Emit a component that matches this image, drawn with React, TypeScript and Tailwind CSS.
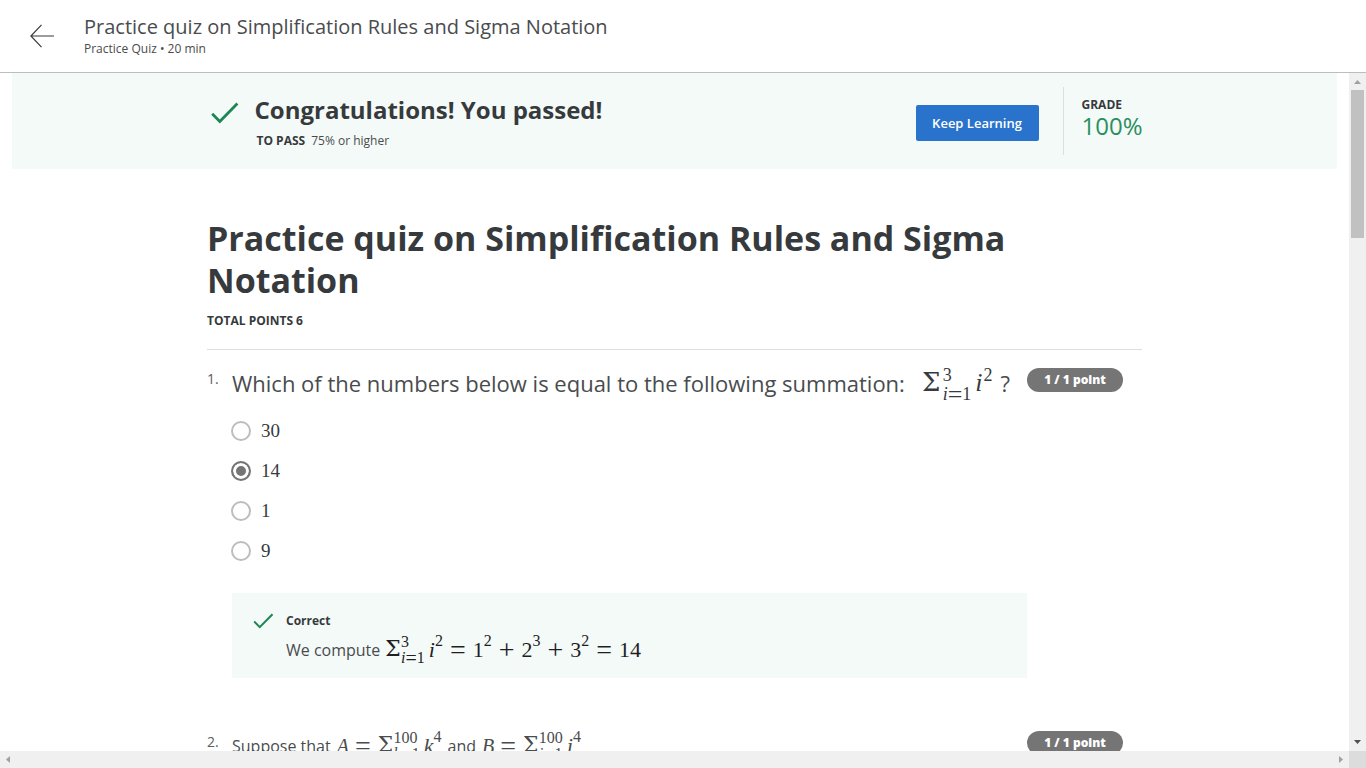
import { useState } from "react";
import type { ReactNode } from "react";

const SERIF = "font-['Liberation_Serif',serif]";

function Check({ className }: { className: string }) {
  return (
    <svg viewBox="0 0 28 22" className={className} fill="none" stroke="#1d8653" strokeWidth="2.8" aria-hidden="true">
      <path d="M1.2 11.8 8.8 19.4 26.4 1.6" />
    </svg>
  );
}

function MathText({ children, className = "" }: { children: ReactNode; className?: string }) {
  return <span className={`${SERIF} inline-flex items-center whitespace-nowrap leading-none ${className}`}>{children}</span>;
}

function Op({ children }: { children: ReactNode }) {
  return <span className="text-[28px] leading-6">{children}</span>;
}

function Sum({ index, from, to, large = false }: { index: string; from: string; to: string; large?: boolean }) {
  return (
    <>
      <span className={large ? "font-['DejaVu_Math_TeX_Gyre','Liberation_Serif',serif] text-[26px]" : "font-['DejaVu_Math_TeX_Gyre','Liberation_Serif',serif] text-[22px]"}>Σ</span>
      <span className={large ? "ml-0.5 flex flex-col pt-1 text-[18px] leading-[19px]" : "flex flex-col text-[16px] leading-4"}>
        <span>{to}</span>
        <span className="flex items-center">
          <i>{index}</i>
          <span className={large ? "text-[26px] leading-4" : "text-[20px] leading-4"}>=</span>
          {from}
        </span>
      </span>
    </>
  );
}

function Power({ base, exp, large = false }: { base: ReactNode; exp: string; large?: boolean }) {
  return (
    <span className="flex">
      <span>{base}</span>
      <span className={large ? "-mt-1 ml-px text-[18px]" : "-mt-1.5 text-[16px]"}>{exp}</span>
    </span>
  );
}

function Badge() {
  return (
    <span className="flex h-6 w-24 shrink-0 items-center justify-center rounded-full bg-[#757575] text-xs font-extrabold text-white">
      1 / 1 point
    </span>
  );
}

function Triangle({ points, fill }: { points: string; fill: string }) {
  return (
    <svg viewBox="0 0 17 17" className="size-[17px] shrink-0" aria-hidden="true">
      <polygon points={points} fill={fill} />
    </svg>
  );
}

export default function App() {
  const [answer, setAnswer] = useState("14");

  return (
    <div className="flex h-screen flex-col overflow-hidden bg-white font-['Open_Sans',sans-serif] text-[#373a3c]">
      <header className="flex h-[73px] shrink-0 items-center border-b border-[#bdbdbd] pl-[30px]">
        <button type="button" aria-label="Back" className="mr-[30px]">
          <svg viewBox="0 0 24 24" className="size-6" fill="none" stroke="#373a3c" strokeWidth="1.2" aria-hidden="true">
            <path d="M24 12H1M11.5 .8 .9 12 11.5 23.2" />
          </svg>
        </button>
        <div className="pt-0.5 text-[#494c4e]">
          <div className="text-xl leading-6">Practice quiz on Simplification Rules and Sigma Notation</div>
          <div className="text-xs leading-5">Practice Quiz • 20 min</div>
        </div>
      </header>

      <div className="flex min-h-0 flex-1">
        <main className="min-w-0 flex-1 overflow-hidden px-3">
          <section className="h-24 bg-[#f4faf8]">
            <div className="mx-auto flex max-w-[936px] items-start">
              <Check className="mt-[29px] ml-1 h-[22px] w-7" />
              <div className="ml-4 flex-1 pt-[21px]">
                <h2 className="text-2xl leading-8 font-bold">Congratulations! You passed!</h2>
                <p className="mt-[5px] pl-0.5 text-xs leading-5 text-[#494c4e]">
                  <span className="mr-1.5 font-bold text-[#373a3c]">TO PASS</span>75% or higher
                </p>
              </div>
              <button type="button" className="mt-8 h-9 w-[123px] rounded-xs bg-[#2a73cc] pt-px text-[13px] font-semibold text-white">
                Keep Learning
              </button>
              <div className="mt-3.5 ml-6 h-[68px] w-20 border-l border-[#dcdfde] pt-2 pl-[18px]">
                <div className="text-xs leading-5 font-bold">GRADE</div>
                <div className="text-2xl leading-[22px] text-[#2a8f5e]">100%</div>
              </div>
            </div>
          </section>

          <div className="mx-auto max-w-[935px] pt-12">
            <h1 className="text-[34px] leading-[42px] font-bold">Practice quiz on Simplification Rules and Sigma Notation</h1>
            <p className="mt-2 text-xs leading-6 font-bold">TOTAL POINTS 6</p>
            <hr className="mt-4 border-[#dedede]" />

            <section className="flex pt-[18px] pr-[19px]">
              <span className="w-[25px] shrink-0 text-sm leading-[22px] text-[#5a5d5f]">1.</span>
              <div className="min-w-0 flex-1">
                <div className="flex h-[30px] items-center text-[22px] text-[#494c4e]">
                  <span className="whitespace-nowrap">Which of the numbers below is equal to the following summation:</span>
                  <MathText className="ml-4 text-[26px] text-[#373a3c]">
                    <Sum index="i" from="1" to="3" large />
                    <span className="ml-1">
                      <Power base={<i>i</i>} exp="2" large />
                    </span>
                  </MathText>
                  <span className="ml-2">?</span>
                </div>
                <fieldset className="mt-[13px]">
                  {["30", "14", "1", "9"].map((value) => (
                    <label key={value} className="flex h-10 items-center gap-2.5">
                      <input
                        type="radio"
                        name="q1"
                        value={value}
                        checked={answer === value}
                        onChange={() => setAnswer(value)}
                        className="-ml-px size-5 appearance-none rounded-full border-2 border-[#bdbdbd] bg-white checked:border-[#757575] checked:bg-[#757575] checked:shadow-[inset_0_0_0_3px_white]"
                      />
                      <span className={`${SERIF} text-[19px] leading-6`}>{value}</span>
                    </label>
                  ))}
                </fieldset>
                <div className="mt-[22px] flex h-[85px] bg-[#f4faf8] pt-[18px] pl-[21px]">
                  <Check className="mt-0.5 h-4 w-[21px]" />
                  <div className="ml-3">
                    <div className="text-xs leading-5 font-bold">Correct</div>
                    <div className="flex h-[38px] items-center text-base text-[#494c4e]">
                      We compute
                      <MathText className="ml-1 gap-[7px] text-[22px] text-[#1f1f1f]">
                        <span className="flex items-center">
                          <Sum index="i" from="1" to="3" />
                          <span className="ml-1">
                            <Power base={<i>i</i>} exp="2" />
                          </span>
                        </span>
                        <Op>=</Op>
                        <Power base="1" exp="2" />
                        <Op>+</Op>
                        <Power base="2" exp="3" />
                        <Op>+</Op>
                        <Power base="3" exp="2" />
                        <Op>=</Op>
                        <span>14</span>
                      </MathText>
                    </div>
                  </div>
                </div>
              </div>
              <Badge />
            </section>

            <section className="mt-[53px] flex pr-[19px]">
              <span className="w-[25px] shrink-0 text-sm leading-[22px] text-[#5a5d5f]">2.</span>
              <div className="flex h-[30px] min-w-0 flex-1 items-center text-base text-[#494c4e]">
                Suppose that
                <MathText className="mx-1.5 gap-1.5 text-[20px]">
                  <i>A</i>
                  <Op>=</Op>
                  <span className="flex items-center">
                    <Sum index="k" from="1" to="100" />
                    <span className="ml-1 text-[22px]">
                      <Power base={<i>k</i>} exp="4" />
                    </span>
                  </span>
                </MathText>
                and
                <MathText className="ml-1.5 gap-1.5 text-[20px]">
                  <i>B</i>
                  <Op>=</Op>
                  <span className="flex items-center">
                    <Sum index="j" from="1" to="100" />
                    <span className="ml-1 text-[22px]">
                      <Power base={<i>j</i>} exp="4" />
                    </span>
                  </span>
                </MathText>
              </div>
              <Badge />
            </section>
          </div>
        </main>

        <div className="flex w-[17px] shrink-0 flex-col bg-[#f0f0f0]">
          <Triangle points="5,11 8.5,7 12,11" fill="#a0a0a0" />
          <div className="mx-0.5 h-[148px] bg-[#c1c1c1]" />
          <div className="flex-1" />
          <Triangle points="5,6 12,6 8.5,10" fill="#505050" />
        </div>
      </div>

      <div className="flex h-[17px] shrink-0 bg-[#f0f0f0]">
        <Triangle points="10,5 10,12 6,8.5" fill="#a0a0a0" />
        <div className="flex-1" />
        <Triangle points="7,5 7,12 11,8.5" fill="#a0a0a0" />
        <div className="w-[17px] bg-[#dcdcdc]" />
      </div>
    </div>
  );
}
